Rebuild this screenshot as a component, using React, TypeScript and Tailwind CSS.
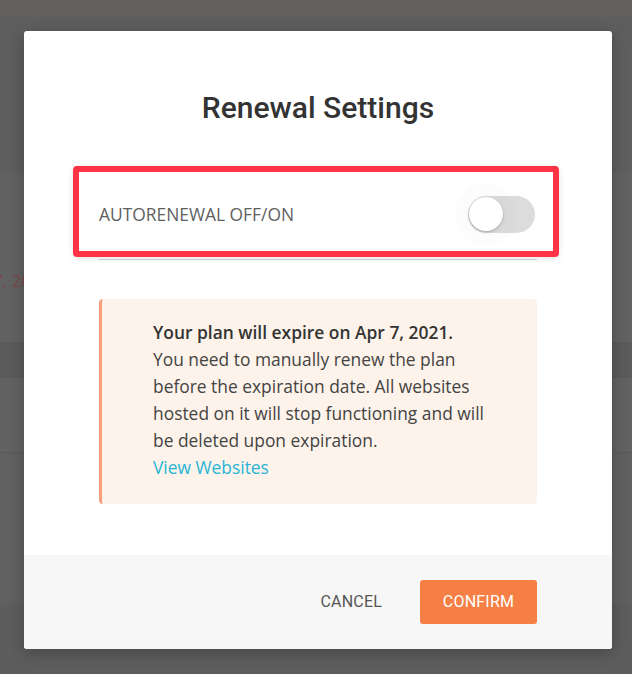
import React from "react";

export default function App() {
  return (
    <div className="relative w-[632px] h-[674px] overflow-hidden bg-[#5f5f5f]" style={{ fontFamily: '"Open Sans", sans-serif' }}>
      {/* underlying page (dimmed) */}
      <div className="flex flex-col">
        <div className="h-[16px] bg-[#63615d]" />
        <div className="h-[156px] bg-[#5e5e5e]" />
        <div className="h-[170px] bg-[#626262] pt-[97px]">
          <div className="-ml-[7px] text-[17px] leading-[24px] text-[#7b4848] whitespace-nowrap">7, 2021</div>
        </div>
        <div className="h-[36px] bg-[#5b5b5b]" />
        <div className="h-[75px] bg-[#626262] border-b border-[#5a5a5a]" />
        <div className="h-[77px] bg-[#616161]" />
        <div className="h-[74px] bg-[#616161]" />
        <div className="h-[70px] bg-[#5d5d5d]" />
      </div>

      {/* modal */}
      <div className="absolute left-[24px] top-[31px] w-[588px] h-[618px] bg-white rounded-[3px] shadow-[0_4px_16px_rgba(0,0,0,0.25)] flex flex-col overflow-hidden">
        <div className="flex-1 px-[75px] pt-[60px] flex flex-col">
          <h2
            className="text-center text-[30px] leading-[33px] font-medium text-[#333333]"
            style={{ fontFamily: "Roboto, sans-serif" }}
          >
            Renewal Settings
          </h2>

          <div className="relative mt-[45px] h-[91px] border-b border-[#d6d6d6] flex items-center justify-between">
            <div className="absolute left-[-26px] right-[-22px] top-[-3px] bottom-[2px] border-[6px] border-[#fe3346] rounded-[4px] shadow-[0_1px_6px_rgba(0,0,0,0.12)]" />
            <span className="relative text-[17.4px] text-[#606060]">AUTORENEWAL OFF/ON</span>
            <div className="relative mr-[2px] w-[67px] h-[37px] rounded-full bg-[#dcdcdc]">
              <div className="absolute left-[-13px] top-[-13px] w-[62px] h-[62px] rounded-full bg-[rgba(0,0,0,0.012)]" />
              <div className="absolute left-[1px] top-[1.5px] w-[34px] h-[34px] rounded-full bg-white shadow-[0_1px_3px_rgba(0,0,0,0.25)]" />
            </div>
          </div>

          <div className="mt-[39px] h-[205px] rounded-[4px] bg-[#fdf3ea] border-l-[3px] border-[#f5a07c] pl-[51px] pr-[30px] pt-[20px] text-[17.4px] leading-[27px] text-[#444444]">
            <div className="font-semibold text-[#333333]">Your plan will expire on Apr 7, 2021.</div>
            <div>
              You need to manually renew the plan before the expiration date. All websites hosted on it will stop
              functioning and will be deleted upon expiration.
            </div>
            <div className="text-[#2ab4d6]">View Websites</div>
          </div>
        </div>

        <div
          className="h-[94px] bg-[#f7f7f7] flex items-center justify-end pr-[75px] gap-[22px]"
          style={{ fontFamily: "Roboto, sans-serif" }}
        >
          <button className="px-[16px] h-[44px] text-[16px] font-normal text-[#555555] tracking-[0.2px]">CANCEL</button>
          <button className="w-[117px] h-[44px] rounded-[3px] bg-[#f57f45] text-white text-[16px] font-normal tracking-[0.2px]">
            CONFIRM
          </button>
        </div>
      </div>
    </div>
  );
}
